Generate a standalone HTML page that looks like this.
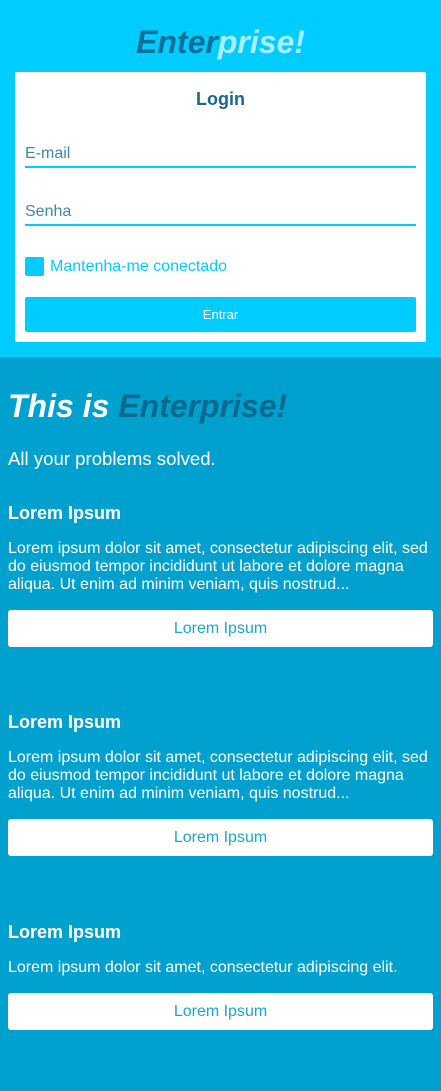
<!DOCTYPE html>
<html><head><meta charset="utf-8"><style>
*{margin:0;padding:0;box-sizing:border-box}
body{width:441px;height:1091px;background:#00a1ce;font-family:"Liberation Sans",sans-serif;position:relative;overflow:hidden}
.a{position:absolute;white-space:nowrap}
.top{position:absolute;left:0;top:0;width:441px;height:357px;background:#00ccff}
.card{position:absolute;left:15px;top:72px;width:411px;height:270px;background:#fff;border-radius:2px}
.line{position:absolute;left:25px;width:391px;height:2px;background:#00ccff}
.btn{position:absolute;left:8px;width:425px;height:37px;background:#fff;border-radius:3px;color:#1aa6d4;font-size:16px;text-align:center;line-height:37px}
h3{position:absolute;left:8px;color:#fff;font-size:18px;font-weight:bold}
p.t{position:absolute;left:8px;width:428px;color:#fff;font-size:16px;line-height:18px}
</style></head><body>
<div class="top"></div>
<div class="a" style="left:0;width:441px;text-align:center;top:24px;font-size:32px;font-weight:bold;font-style:italic"><span style="color:#0b6f96">Enter</span><span style="color:#a8eeff">prise!</span></div>
<div class="card"></div>
<div class="a" style="left:0;width:441px;text-align:center;top:89px;font-size:18px;font-weight:bold;color:#1a6690">Login</div>
<div class="a" style="left:25px;top:145px;font-size:16px;color:#3a8aa8">E-mail</div>
<div class="line" style="top:166px"></div>
<div class="a" style="left:25px;top:203px;font-size:16px;color:#3a8aa8">Senha</div>
<div class="line" style="top:224px"></div>
<div class="a" style="left:25px;top:257px;width:19px;height:19px;background:#00ccff;border-radius:2px"></div>
<div class="a" style="left:50px;top:258px;font-size:16px;color:#00ccff">Mantenha-me conectado</div>
<div class="a" style="left:25px;top:297px;width:391px;height:35px;background:#00ccff;border-radius:2px;color:#fff;font-size:13px;text-align:center;line-height:35px">Entrar</div>

<div class="a" style="left:8px;top:388px;font-size:32px;font-weight:bold;font-style:italic;color:#fff">This is <span style="color:#076a8e">Enterprise!</span></div>
<div class="a" style="left:8px;top:448px;font-size:18.6px;color:#fff">All your problems solved.</div>

<h3 style="top:503px">Lorem Ipsum</h3>
<p class="t" style="top:540px">Lorem ipsum dolor sit amet, consectetur adipiscing elit, sed do eiusmod tempor incididunt ut labore et dolore magna aliqua. Ut enim ad minim veniam, quis nostrud...</p>
<div class="btn" style="top:610px">Lorem Ipsum</div>

<h3 style="top:712px">Lorem Ipsum</h3>
<p class="t" style="top:749px">Lorem ipsum dolor sit amet, consectetur adipiscing elit, sed do eiusmod tempor incididunt ut labore et dolore magna aliqua. Ut enim ad minim veniam, quis nostrud...</p>
<div class="btn" style="top:819px">Lorem Ipsum</div>

<h3 style="top:922px">Lorem Ipsum</h3>
<p class="t" style="top:959px">Lorem ipsum dolor sit amet, consectetur adipiscing elit.</p>
<div class="btn" style="top:993px">Lorem Ipsum</div>
</body></html>
